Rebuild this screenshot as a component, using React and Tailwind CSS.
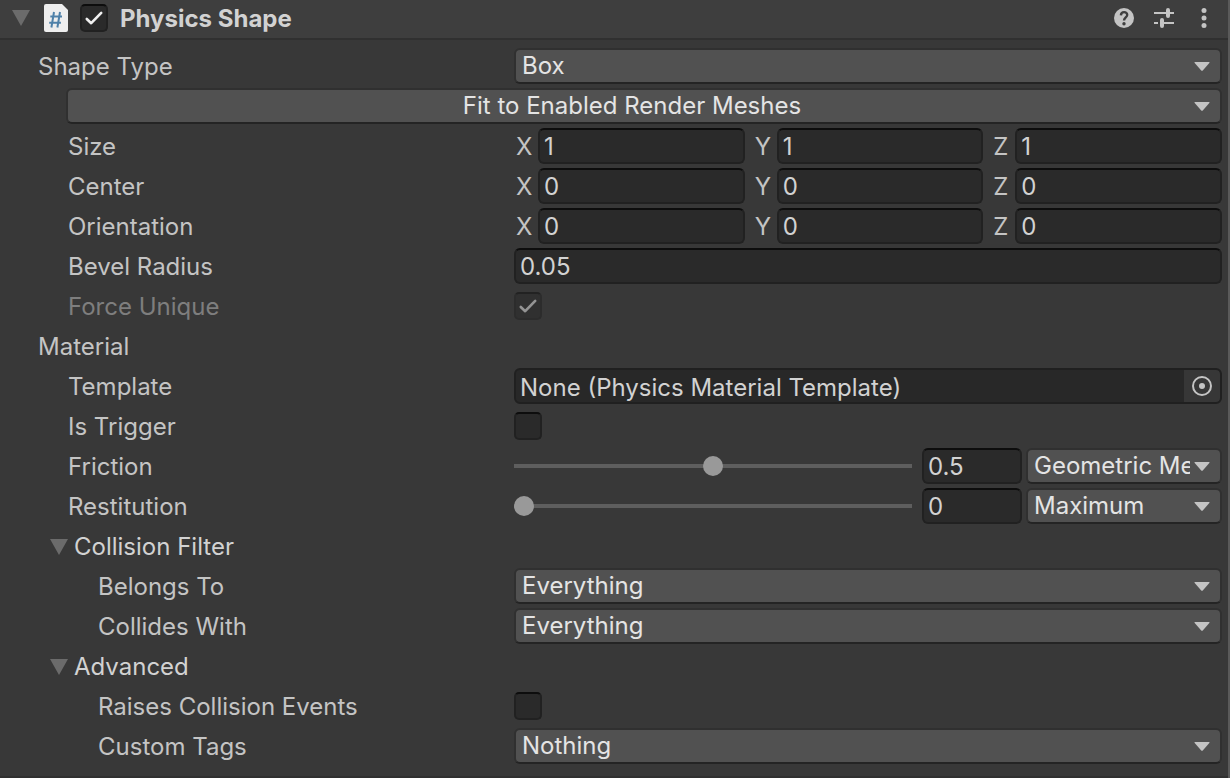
import { useState } from 'react';

const inputClass =
  'h-9 w-full min-w-0 rounded-md border-2 border-[#212121] border-t-[#0d0d0d] bg-[#2a2a2a] px-1 text-2xl text-[#d2d2d2] outline-none';

function Foldout({ className = '' }) {
  return (
    <svg className={`h-4 w-[18px] shrink-0 ${className}`} viewBox="0 0 18 16" fill="#6b6b6b" aria-hidden="true">
      <path d="M0 0H18L9 16Z" />
    </svg>
  );
}

function DropArrow({ className }) {
  return (
    <svg className={`pointer-events-none absolute h-[9px] w-4 ${className}`} viewBox="0 0 16 9" fill="#c4c4c4" aria-hidden="true">
      <path d="M1 0H15Q16 0.3 15.3 1.1L9 8.2Q8 9.3 7 8.2L0.7 1.1Q0 0.3 1 0Z" />
    </svg>
  );
}

function Dropdown({ id, options, label, className = 'w-full' }) {
  return (
    <div className={`relative ${className}`}>
      <select
        id={id}
        aria-label={label}
        className="block h-9 w-full appearance-none rounded-md border-2 border-[#303030] border-b-[#242424] bg-[#515151] pr-[30px] pb-0.5 pl-1.5 text-2xl text-[#e4e4e4] outline-none"
      >
        {options.map((o) => (
          <option key={o}>{o}</option>
        ))}
      </select>
      <DropArrow className="top-3.5 right-3" />
    </div>
  );
}

function Checkbox({ id, label, defaultChecked = false, disabled = false }) {
  return (
    <span className={`relative block size-7 shrink-0 ${disabled ? 'opacity-50' : ''}`}>
      <input
        id={id}
        type="checkbox"
        aria-label={label}
        defaultChecked={defaultChecked}
        disabled={disabled}
        className="peer block size-7 appearance-none rounded-[5px] border-2 border-[#212121] border-t-[#0d0d0d] bg-[#2a2a2a]"
      />
      <svg
        className="pointer-events-none absolute inset-0 hidden size-7 peer-checked:block"
        viewBox="0 0 28 28"
        fill="none"
        stroke="#f0f0f0"
        strokeWidth="2.6"
        strokeLinecap="round"
        strokeLinejoin="round"
        aria-hidden="true"
      >
        <path d="M6.8 15L11.2 19.2L21.2 8.9" />
      </svg>
    </span>
  );
}

function Row({ id, label, indent = 'pl-[68px]', muted = false, children }) {
  return (
    <div className="grid h-10 grid-cols-[514px_minmax(0,1fr)] items-center">
      <label htmlFor={id} className={`truncate pt-0.5 ${indent} ${muted ? 'text-[#7e7e7e]' : 'text-[#c4c4c4]'}`}>
        {label}
      </label>
      {children}
    </div>
  );
}

function VectorRow({ id, label, value }) {
  return (
    <Row id={`${id}-X`} label={label}>
      <div className="grid grid-cols-3 gap-2">
        {['X', 'Y', 'Z'].map((axis) => (
          <div key={axis} className="flex items-center">
            <label htmlFor={`${id}-${axis}`} className="w-6 shrink-0 pt-0.5 pl-0.5 text-[#c4c4c4]">
              {axis}
            </label>
            <input id={`${id}-${axis}`} className={inputClass} defaultValue={value} />
          </div>
        ))}
      </div>
    </Row>
  );
}

function SliderRow({ id, label, initial, combine }) {
  const [value, setValue] = useState(initial);
  return (
    <Row id={id} label={label}>
      <div className="flex items-center">
        <input
          id={id}
          type="range"
          min="0"
          max="1"
          step="0.01"
          value={value}
          onChange={(e) => setValue(e.target.value)}
          className="mr-2.5 h-5 min-w-0 flex-1 appearance-none bg-transparent outline-none [&::-webkit-slider-runnable-track]:h-1 [&::-webkit-slider-runnable-track]:bg-[#5e5e5e] [&::-webkit-slider-thumb]:-mt-2 [&::-webkit-slider-thumb]:size-5 [&::-webkit-slider-thumb]:appearance-none [&::-webkit-slider-thumb]:rounded-full [&::-webkit-slider-thumb]:bg-[#999999]"
        />
        <div className="mr-1 w-[100px] shrink-0">
          <input
            aria-label={`${label} value`}
            className={inputClass}
            value={value}
            onChange={(e) => setValue(e.target.value)}
          />
        </div>
        <Dropdown label={`${label} combine mode`} options={combine} className="w-[196px] shrink-0" />
      </div>
    </Row>
  );
}

function Section({ title, children }) {
  const [open, setOpen] = useState(true);
  return (
    <section>
      <button
        type="button"
        aria-expanded={open}
        onClick={() => setOpen(!open)}
        className="flex h-10 w-full items-center gap-1.5 pt-0.5 pl-[50px] text-left text-[#d2d2d2]"
      >
        <Foldout className={open ? '' : '-rotate-90'} />
        {title}
      </button>
      {open && children}
    </section>
  );
}

export default function App() {
  return (
    <main className="min-h-screen border-r-2 border-[#5a5a5a] bg-[#383838] font-['Inter',sans-serif] text-2xl [font-optical-sizing:none]">
      <header className="flex h-10 items-center border-b-2 border-[#303030] bg-[#3e3e3e] pr-3.5 pb-0.5 pl-3">
        <button type="button" aria-label="Collapse component">
          <Foldout />
        </button>
        <svg className="mr-3 ml-3.5 h-7 w-6 shrink-0" viewBox="0 0 24 28" fill="none" aria-hidden="true">
          <path d="M2 0H18L24 6V26Q24 28 22 28H2Q0 28 0 26V2Q0 0 2 0Z" fill="#eeeeee" />
          <path d="M10 8L7.4 23.5M16 8L13.4 23.5M6.3 12.5H18M5.2 18.8H16.9" stroke="#4f81a9" strokeWidth="2" />
        </svg>
        <Checkbox label="Enable Physics Shape" defaultChecked />
        <h1 className="ml-3 flex-1 truncate pt-0.5 font-bold text-[#d2d2d2]">Physics Shape</h1>
        <div className="flex items-center gap-5">
          <button type="button" aria-label="Help">
            <svg className="block size-5" viewBox="0 0 20 20" fill="none" aria-hidden="true">
              <circle cx="10" cy="10" r="10" fill="#c4c4c4" />
              <path d="M6.9 7.4C7 3 13.3 3.2 13.2 7C13.1 9.4 10 9.4 10 12.6" stroke="#3e3e3e" strokeWidth="2.4" />
              <circle cx="10" cy="15.8" r="1.7" fill="#3e3e3e" />
            </svg>
          </button>
          <button type="button" aria-label="Presets">
            <svg className="block size-5" viewBox="0 0 20 20" fill="none" stroke="#c4c4c4" aria-hidden="true">
              <path d="M0 5H12M14 5H20M0 15H4M10 15H20" strokeWidth="2" />
              <path d="M14 2V8M8 12V18" strokeWidth="4" strokeLinecap="round" />
            </svg>
          </button>
          <button type="button" aria-label="More options">
            <svg className="block size-5" viewBox="0 0 20 20" fill="#c4c4c4" aria-hidden="true">
              <circle cx="10" cy="2.5" r="2.5" />
              <circle cx="10" cy="10" r="2.5" />
              <circle cx="10" cy="17.5" r="2.5" />
            </svg>
          </button>
        </div>
      </header>

      <div className="border-b-2 border-[#303030] pt-1.5 pb-2.5 *:pr-1.5">
        <Row id="shape" label="Shape Type" indent="pl-[38px]">
          <Dropdown id="shape" options={['Box', 'Capsule', 'Sphere', 'Cylinder']} />
        </Row>
        <div className="flex h-10 items-center pl-[66px]">
          <button
            type="button"
            className="relative flex h-9 w-full items-center justify-center rounded-md border-2 border-[#303030] border-b-[#242424] bg-[#515151] pr-6 text-[#e4e4e4]"
          >
            Fit to Enabled Render Meshes
            <DropArrow className="top-3 right-2.5" />
          </button>
        </div>
        <VectorRow id="size" label="Size" value="1" />
        <VectorRow id="center" label="Center" value="0" />
        <VectorRow id="orientation" label="Orientation" value="0" />
        <Row id="bevel" label="Bevel Radius">
          <input id="bevel" className={inputClass} defaultValue="0.05" />
        </Row>
        <Row id="unique" label="Force Unique" muted>
          <Checkbox id="unique" defaultChecked disabled />
        </Row>
        <h2 className="flex h-10 items-center pt-0.5 pl-[38px] text-[#c4c4c4]">Material</h2>
        <Row id="template" label="Template">
          <div className="flex h-9 overflow-hidden rounded-md border-2 border-[#202020] bg-[#282828]">
            <input
              id="template"
              readOnly
              defaultValue="None (Physics Material Template)"
              className="min-w-0 flex-1 bg-transparent px-1 pt-1 text-[#d2d2d2] outline-none"
            />
            <button
              type="button"
              aria-label="Select material template"
              className="flex w-9 items-center justify-center rounded-r bg-[#373737]"
            >
              <svg className="size-5" viewBox="0 0 20 20" fill="none" aria-hidden="true">
                <circle cx="10" cy="10" r="9" stroke="#c4c4c4" strokeWidth="2" />
                <circle cx="10" cy="10" r="3" fill="#c4c4c4" />
              </svg>
            </button>
          </div>
        </Row>
        <Row id="trigger" label="Is Trigger">
          <Checkbox id="trigger" />
        </Row>
        <SliderRow
          id="friction"
          label="Friction"
          initial="0.5"
          combine={['Geometric Mean', 'Minimum', 'Maximum', 'Arithmetic Mean']}
        />
        <SliderRow
          id="restitution"
          label="Restitution"
          initial="0"
          combine={['Maximum', 'Minimum', 'Geometric Mean', 'Arithmetic Mean']}
        />
        <Section title="Collision Filter">
          <Row id="belongs" label="Belongs To" indent="pl-[98px]">
            <Dropdown id="belongs" options={['Everything', 'Nothing']} />
          </Row>
          <Row id="collides" label="Collides With" indent="pl-[98px]">
            <Dropdown id="collides" options={['Everything', 'Nothing']} />
          </Row>
        </Section>
        <Section title="Advanced">
          <Row id="events" label="Raises Collision Events" indent="pl-[98px]">
            <Checkbox id="events" />
          </Row>
          <Row id="tags" label="Custom Tags" indent="pl-[98px]">
            <Dropdown id="tags" options={['Nothing', 'Everything']} />
          </Row>
        </Section>
      </div>
    </main>
  );
}
